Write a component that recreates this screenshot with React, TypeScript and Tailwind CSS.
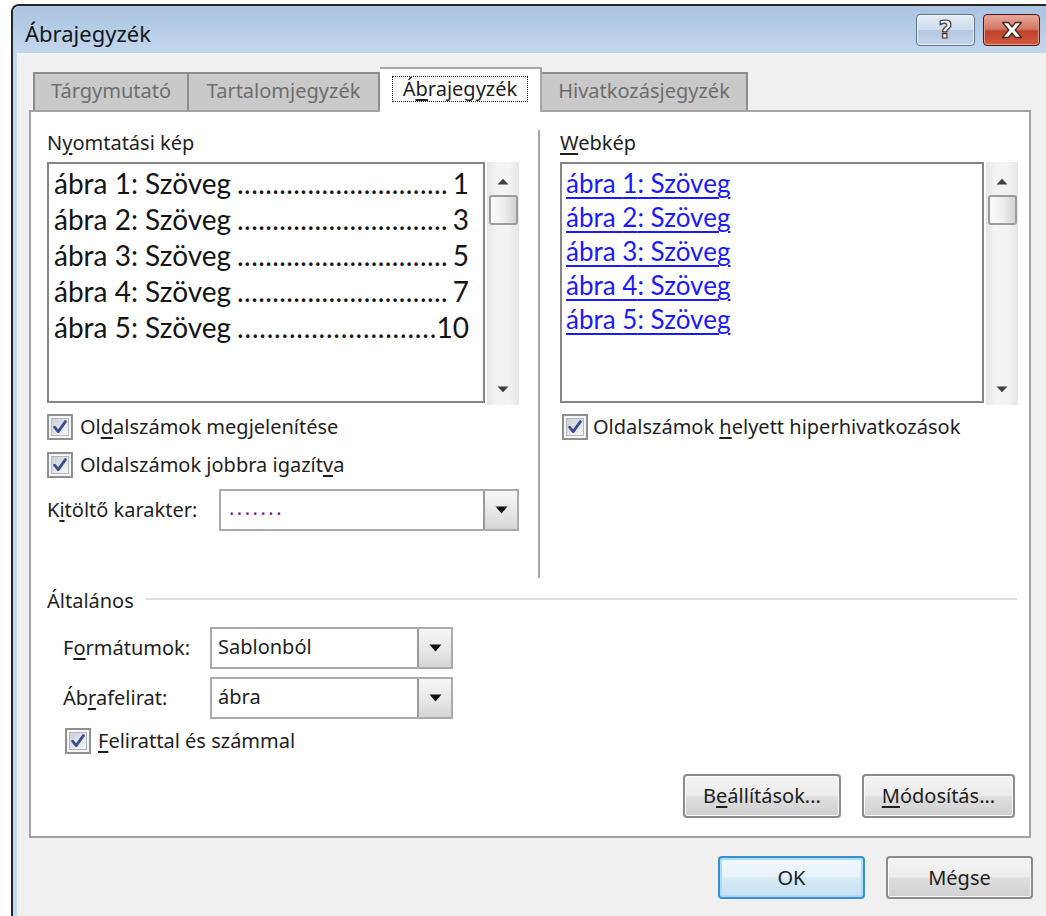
import React from "react";

function CheckBox() {
  return (
    <svg width="26" height="26" viewBox="0 0 26 26" className="shrink-0">
      <defs>
        <linearGradient id="cbFill" x1="0" y1="0" x2="1" y2="1">
          <stop offset="0" stopColor="#c9ced6" />
          <stop offset="1" stopColor="#f8f8f8" />
        </linearGradient>
      </defs>
      <rect x="1" y="1" width="24" height="24" fill="#f6f6f6" stroke="#8e8f8f" strokeWidth="2" />
      <rect x="4.5" y="4.5" width="17" height="17" fill="url(#cbFill)" stroke="#b3b8c0" strokeWidth="1" />
      <path
        d="M7.6 13.2 L11.2 17.6 L18.4 7.6"
        fill="none"
        stroke="#3a4e92"
        strokeWidth="2.8"
        strokeLinecap="round"
        strokeLinejoin="round"
      />
    </svg>
  );
}

function DownTriangle() {
  return (
    <svg width="13" height="8" viewBox="0 0 13 8">
      <path d="M0.5 0.5 H12.5 L6.5 7.5 Z" fill="#111" />
    </svg>
  );
}

function ScrollBar() {
  return (
    <div className="ml-[2px] flex h-[243px] w-[32px] flex-col items-center bg-[linear-gradient(to_right,#e6e6e6,#f3f3f3_30%,#f3f3f3_70%,#e6e6e6)]">
      <svg width="12" height="7" viewBox="0 0 12 7" className="mt-[16px]">
        <path d="M0.5 6.5 L6 0.8 L11.5 6.5 Z" fill="#3f3f3f" />
      </svg>
      <div className="mt-[10px] h-[30px] w-[29px] rounded-[3px] border-2 border-[#9c9c9c] bg-[linear-gradient(to_right,#fbfbfb,#eeeeee_50%,#d2d2d2)]" />
      <div className="flex-1" />
      <svg width="12" height="7" viewBox="0 0 12 7" className="mb-[12px]">
        <path d="M0.5 0.5 L11.5 0.5 L6 6.2 Z" fill="#3f3f3f" />
      </svg>
    </div>
  );
}

function Button({ children, wide }: { children: React.ReactNode; wide: string }) {
  return (
    <div
      className={`${wide} flex h-[44px] items-center justify-center rounded-[4px] border-2 border-[#8b8b8b] bg-[linear-gradient(#f4f4f4_0%,#ececec_48%,#dedede_52%,#d0d0d0_100%)] text-[20px] text-[#1e1e1e] shadow-[inset_0_0_0_1px_#fbfbfb]`}
    >
      {children}
    </div>
  );
}

// figure number, page number, number of leader dots
const rows: [string, string, number][] = [
  ["1", "1", 30],
  ["2", "3", 30],
  ["3", "5", 30],
  ["4", "7", 30],
  ["5", "10", 27],
];

export default function App() {
  return (
    <div className="h-[916px] w-[1046px] overflow-hidden bg-white pl-[11px] pt-[4px] font-['Noto_Sans',sans-serif] text-[#1e1e1e]">
      {/* window frame */}
      <div className="flex h-[940px] w-[1035px] flex-col overflow-hidden rounded-tl-[8px] border-l-2 border-t-2 border-[#262626]">
        {/* caption */}
        <div className="flex h-[47px] shrink-0 bg-[linear-gradient(#a9c3e1,#c3d7ee)] pl-[12px]">
          <div className="mt-[14px] text-[22px] leading-[26px] text-[#151515]">Ábrajegyzék</div>
          <div className="ml-auto mr-[6px] mt-[8px] flex gap-[8px]">
            <div className="flex h-[32px] w-[59px] items-center justify-center rounded-[4px] border border-[#5f7390] bg-[linear-gradient(#e4ecf6_0%,#cddcee_48%,#b4c8e1_52%,#c3d5ea_100%)] shadow-[inset_0_0_0_1px_#eef4fb]">
              <span className="font-['DejaVu_Sans',sans-serif] text-[24px] font-bold leading-none text-[#f4f4f4] [-webkit-text-stroke:1.2px_#3c3c3c]">
                ?
              </span>
            </div>
            <div className="flex h-[32px] w-[57px] items-center justify-center rounded-[4px] border border-[#4f1a12] bg-[linear-gradient(#e9a99b_0%,#d27a66_45%,#c2412a_55%,#d05a40_100%)] shadow-[inset_0_0_0_1px_#e79a8a]">
              <svg width="26" height="20" viewBox="0 0 26 20">
                <path
                  d="M3.5 2.5 H9.5 L13 7 L16.5 2.5 H22.5 L16.2 10 L22.5 17.5 H16.5 L13 13 L9.5 17.5 H3.5 L9.8 10 Z"
                  fill="#fbfbfb"
                  stroke="#4a2a25"
                  strokeWidth="1.3"
                  strokeLinejoin="round"
                />
              </svg>
            </div>
          </div>
        </div>

        {/* body: thin glass strip + client */}
        <div className="flex flex-1">
          <div className="w-[4px] bg-[#c3d7ee]" />
          <div className="flex flex-1 flex-col bg-[#f0f0f0] pl-[12px]">
            {/* tabs */}
            <div className="relative z-10 ml-[4px] mt-[14px] flex h-[43px] items-end">
              <div className="flex h-[38px] w-[156px] items-center justify-center border-2 border-b-0 border-[#8d8d8d] bg-[#c9c9c9] pb-[2px] text-[20px] text-[#6e6e6e]">
                Tárgymutató
              </div>
              <div className="flex h-[38px] w-[191px] items-center justify-center border-2 border-b-0 border-l-0 border-[#8d8d8d] bg-[#c9c9c9] pb-[2px] text-[20px] text-[#6e6e6e]">
                Tartalomjegyzék
              </div>
              <div className="-mb-[2px] flex h-[45px] w-[162px] items-start justify-center border-2 border-b-0 border-l-0 border-[#a6a6a6] bg-white pt-[7px]">
                <div className="border border-dotted border-[#222] px-[10px] text-[20px] leading-[24px]">
                  Á<u className="decoration-[1.5px] underline-offset-[3px]">b</u>rajegyzék
                </div>
              </div>
              <div className="flex h-[38px] w-[206px] items-center justify-center border-2 border-b-0 border-l-0 border-[#8d8d8d] bg-[#c9c9c9] pb-[2px] text-[20px] text-[#6e6e6e]">
                Hivatkozásjegyzék
              </div>
            </div>

            {/* tab page */}
            <div className="flex h-[728px] w-[1002px] flex-col border-2 border-[#a3a3a3] bg-white">
              <div className="flex h-[466px] pl-[16px] pt-[18px]">
                {/* print preview column */}
                <div className="flex w-[472px] flex-col">
                  <div className="h-[26px] text-[20px] leading-[26px]">
                    N<u className="decoration-[1.5px] underline-offset-[3px]">y</u>omtatási kép
                  </div>
                  <div className="mt-[6px] flex">
                    <div className="h-[241px] w-[438px] border-2 border-[#858585] bg-white pl-[5px] pr-[14px] pt-[1px] font-['Lato',sans-serif] text-[28px] leading-[36px] text-[#141414]">
                      {rows.map(([n, p, dots]) => (
                        <div key={n} className="flex whitespace-nowrap">
                          <span>ábra {n}: Szöveg</span>
                          <span className="ml-[6px] flex flex-1 justify-between">
                            {Array.from({ length: dots }, (_, i) => (
                              <span key={i}>.</span>
                            ))}
                          </span>
                          <span className={p.length === 1 ? "pl-[5px]" : ""}>{p}</span>
                        </div>
                      ))}
                    </div>
                    <ScrollBar />
                  </div>
                  <div className="mt-[9px] flex h-[26px] items-center gap-[7px] text-[20px]">
                    <CheckBox />
                    <span>
                      Ol<u className="decoration-[1.5px] underline-offset-[3px]">d</u>alszámok megjelenítése
                    </span>
                  </div>
                  <div className="mt-[12px] flex h-[26px] items-center gap-[7px] text-[20px]">
                    <CheckBox />
                    <span>
                      Oldalszámok jobbra igazít<u className="decoration-[1.5px] underline-offset-[3px]">v</u>a
                    </span>
                  </div>
                  <div className="mt-[11px] flex items-center">
                    <span className="w-[172px] text-[20px]">
                      K<u className="decoration-[1.5px] underline-offset-[3px]">i</u>töltő karakter:
                    </span>
                    <div className="flex h-[42px] w-[300px] border-2 border-[#ababab] bg-white">
                      <div className="flex-1 pl-[8px] text-[20px] leading-[34px] tracking-[2.5px] text-[#7a1f96]">.......</div>
                      <div className="flex w-[34px] items-center justify-center border-l-2 border-[#9a9a9a] bg-[linear-gradient(#f7f7f7,#e9e9e9_50%,#d6d6d6)]">
                        <DownTriangle />
                      </div>
                    </div>
                  </div>
                </div>

                {/* divider */}
                <div className="ml-[19px] w-[2px] bg-[#a6a6a6]" />

                {/* web preview column */}
                <div className="ml-[20px] flex w-[458px] flex-col">
                  <div className="h-[26px] text-[20px] leading-[26px]">
                    <u className="decoration-[1.5px] underline-offset-[3px]">W</u>ebkép
                  </div>
                  <div className="mt-[6px] flex">
                    <div className="h-[241px] w-[424px] border-2 border-[#858585] bg-white pl-[4px] pt-[2px] font-['Lato',sans-serif] text-[26px] leading-[34px] text-[#1a1aff]">
                      {rows.map(([n]) => (
                        <div key={n} className="whitespace-nowrap">
                          <span className="underline decoration-2 underline-offset-[4px]">ábra {n}: Szöveg</span>
                        </div>
                      ))}
                    </div>
                    <ScrollBar />
                  </div>
                  <div className="mt-[9px] flex h-[26px] items-center gap-[5px] pl-[2px] text-[20px]">
                    <CheckBox />
                    <span>
                      Oldalszámok <u className="decoration-[1.5px] underline-offset-[3px]">h</u>elyett hiperhivatkozások
                    </span>
                  </div>
                </div>
              </div>

              {/* general group */}
              <div className="mt-[10px] flex h-[26px] items-center pl-[16px] pr-[12px]">
                <span className="text-[20px] leading-[26px]">Általános</span>
                <div className="ml-[12px] mt-[-4px] h-[2px] flex-1 bg-[#d6e0e6]" />
              </div>
              <div className="mt-[13px] flex items-center pl-[32px]">
                <span className="w-[147px] text-[20px]">
                  F<u className="decoration-[1.5px] underline-offset-[3px]">o</u>rmátumok:
                </span>
                <div className="flex h-[42px] w-[243px] border-2 border-[#ababab] bg-white">
                  <div className="flex-1 pl-[6px] text-[20px] leading-[36px]">Sablonból</div>
                  <div className="flex w-[34px] items-center justify-center border-l-2 border-[#9a9a9a] bg-[linear-gradient(#f7f7f7,#e9e9e9_50%,#d6d6d6)]">
                    <DownTriangle />
                  </div>
                </div>
              </div>
              <div className="mt-[8px] flex items-center pl-[32px]">
                <span className="w-[147px] text-[20px]">
                  Áb<u className="decoration-[1.5px] underline-offset-[3px]">r</u>afelirat:
                </span>
                <div className="flex h-[42px] w-[243px] border-2 border-[#ababab] bg-white">
                  <div className="flex-1 pl-[6px] text-[20px] leading-[36px]">ábra</div>
                  <div className="flex w-[34px] items-center justify-center border-l-2 border-[#9a9a9a] bg-[linear-gradient(#f7f7f7,#e9e9e9_50%,#d6d6d6)]">
                    <DownTriangle />
                  </div>
                </div>
              </div>
              <div className="mt-[9px] flex h-[26px] items-center gap-[7px] pl-[34px] text-[20px]">
                <CheckBox />
                <span>
                  <u className="decoration-[1.5px] underline-offset-[3px]">F</u>elirattal és számmal
                </span>
              </div>
              <div className="mt-[20px] flex justify-end gap-[21px] pr-[14px]">
                <Button wide="w-[158px]">
                  <span>
                    B<u className="decoration-[1.5px] underline-offset-[3px]">e</u>állítások...
                  </span>
                </Button>
                <Button wide="w-[153px]">
                  <span>
                    <u className="decoration-[1.5px] underline-offset-[3px]">M</u>ódosítás...
                  </span>
                </Button>
              </div>
            </div>

            {/* dialog buttons */}
            <div className="mt-[18px] flex gap-[21px] pl-[689px]">
              <div className="flex h-[43px] w-[147px] items-center justify-center rounded-[4px] border-2 border-[#3d8ed0] bg-[linear-gradient(#f2f9fd_0%,#e6f2fa_48%,#d5e9f6_52%,#c6e1f3_100%)] text-[20px] shadow-[inset_0_0_0_2px_#a9dcf7]">
                OK
              </div>
              <div className="flex h-[43px] w-[147px] items-center justify-center rounded-[4px] border-2 border-[#8b8b8b] bg-[linear-gradient(#f4f4f4_0%,#ececec_48%,#dedede_52%,#d0d0d0_100%)] text-[20px] shadow-[inset_0_0_0_1px_#fbfbfb]">
                Mégse
              </div>
            </div>
          </div>
        </div>
      </div>
    </div>
  );
}
